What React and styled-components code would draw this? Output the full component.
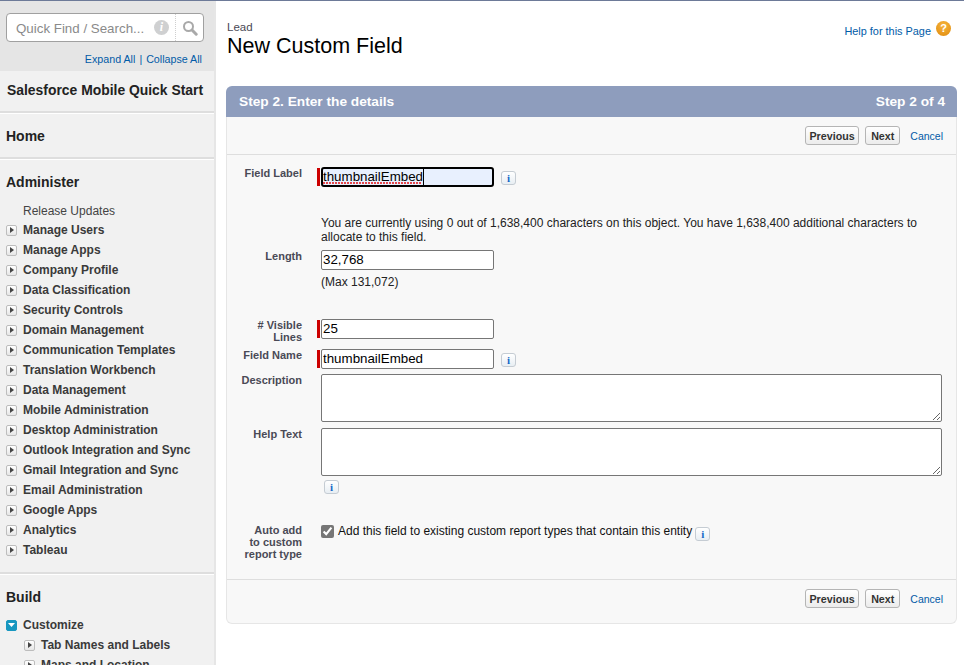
import React from 'react';
import styled, { createGlobalStyle } from 'styled-components';

const GlobalStyle = createGlobalStyle`
  html, body {
    margin: 0;
    padding: 0;
    height: 100%;
    overflow: hidden;
    background: #fff;
    font-family: "Liberation Sans", Arial, sans-serif;
    font-size: 12px;
    color: #222;
  }
`;

const Page = styled.div`
  display: flex;
  width: 964px;
  height: 665px;
  overflow: hidden;
  border-top: 1px solid #6d7a98;
  box-sizing: border-box;
`;

const Sidebar = styled.aside`
  width: 216px;
  flex: none;
  box-sizing: border-box;
  background: #f1f1f1;
  border-right: 2px solid #e6e6e6;
`;

const SearchArea = styled.div`
  height: 70px;
  box-sizing: border-box;
  background: #e5e5e5;
  padding: 12px 12px 0 6px;
`;

const SearchBox = styled.div`
  display: flex;
  align-items: center;
  height: 29px;
  width: 198px;
  box-sizing: border-box;
  background: #fff;
  border: 1px solid #a0a0a0;
  border-radius: 4px;
`;

const SearchText = styled.span`
  flex: 1;
  padding: 1px 0 0 9px;
  font-size: 13.33px;
  color: #8a8a8a;
  white-space: nowrap;
`;

const HintDot = styled.span`
  width: 15px;
  height: 15px;
  margin-right: 6px;
  border-radius: 50%;
  background: #cfd0d1;
  color: #fff;
  font: italic bold 12px/15px "Liberation Serif", serif;
  text-align: center;
`;

const SearchBtn = styled.span`
  display: flex;
  align-items: center;
  justify-content: center;
  width: 27px;
  height: 100%;
  border-left: 1px dotted #cfcfcf;
`;

const ExpandRow = styled.div`
  display: flex;
  justify-content: flex-end;
  gap: 4px;
  margin-top: 11px;
  font-size: 10.7px;
  line-height: 13px;
  color: #015ba7;
`;

const Section = styled.section`
  height: ${(p) => p.$height}px;
  box-sizing: border-box;
  border-bottom: 2px solid #dedede;
  box-shadow: 0 1px 0 #fff;
  margin-bottom: 1px;
  &:last-child {
    border-bottom: 0;
    box-shadow: none;
  }
`;

const SectionTitle = styled.h2`
  margin: 0;
  padding: ${(p) => p.$top}px 0 0 ${(p) => p.$left || 6}px;
  font-size: ${(p) => p.$size || 14}px;
  line-height: 16px;
  font-weight: bold;
  color: #222;
  white-space: nowrap;
`;

const MenuList = styled.div`
  margin-top: ${(p) => p.$top}px;
`;

const MenuRow = styled.div`
  display: flex;
  align-items: center;
  gap: 6px;
  height: ${(p) => (p.$plain ? 19 : 20)}px;
  padding-left: ${(p) => (p.$nested ? 24 : 6)}px;
  font-size: 12px;
  font-weight: ${(p) => (p.$plain ? 'normal' : 'bold')};
  color: #3a3a3a;
  white-space: nowrap;
`;

const PlainText = styled.span`
  padding-left: 17px;
  color: #444;
`;

const Toggle = styled.span`
  display: flex;
  align-items: center;
  justify-content: center;
  flex: none;
  width: 11px;
  height: 11px;
  box-sizing: border-box;
  border-radius: 2px;
  border: 1px solid ${(p) => (p.$open ? '#1797c0' : '#bdbdbd')};
  background: ${(p) => (p.$open ? '#1797c0' : 'linear-gradient(#fff, #e6e6e6)')};
`;

const Main = styled.main`
  flex: none;
  width: 731px;
  margin-left: 10px;
`;

const PageHead = styled.header`
  display: flex;
  justify-content: space-between;
  height: 85px;
`;

const Crumb = styled.div`
  padding: 20px 0 0 1px;
  font-size: 11.5px;
  line-height: 13px;
  color: #4a4a56;
`;

const PageTitle = styled.h1`
  margin: 0 0 0 1px;
  font-size: 21.5px;
  line-height: 24px;
  font-weight: normal;
  color: #000;
`;

const HelpLink = styled.div`
  display: flex;
  align-items: flex-start;
  gap: 5px;
  margin: 20px 6px 0 0;
  font-size: 10.9px;
  color: #015ba7;
`;

const HelpText = styled.span`
  padding-top: 4px;
`;

const HelpDot = styled.span`
  width: 15px;
  height: 15px;
  border-radius: 50%;
  background: radial-gradient(circle at 50% 30%, #f6b53f, #e08a0b);
  color: #fff;
  font-size: 11px;
  font-weight: bold;
  line-height: 15px;
  text-align: center;
`;

const Panel = styled.div`
  height: 538px;
  box-sizing: border-box;
  display: flex;
  flex-direction: column;
  background: #f8f8f8;
  border: 1px solid #e6e6e6;
  border-top: 0;
  border-radius: 8px 8px 6px 6px;
`;

const PanelHead = styled.div`
  display: flex;
  justify-content: space-between;
  align-items: center;
  height: 31px;
  margin: 0 -1px;
  padding: 0 12px 0 13px;
  border-radius: 6px 6px 0 0;
  background: #8e9dbd;
  color: #fff;
  font-size: 13.7px;
  font-weight: bold;
`;

const ButtonBar = styled.div`
  display: flex;
  justify-content: flex-end;
  align-items: center;
  gap: 6px;
  flex: none;
  height: ${(p) => p.$height}px;
  box-sizing: border-box;
  padding: 0 13px ${(p) => p.$lift || 0}px 0;
  border-${(p) => p.$edge}: 1px solid #dedede;
`;

const Button = styled.button`
  height: 19px;
  padding: 0 ${(p) => p.$pad}px;
  border: 1px solid #b5b5b5;
  border-radius: 3px;
  background: linear-gradient(#fff, #ececec);
  color: #333;
  font: bold 10.7px "Liberation Sans", Arial, sans-serif;
`;

const CancelLink = styled.span`
  margin-left: 4px;
  font-size: 10.5px;
  color: #015ba7;
`;

const FormBody = styled.div`
  flex: 1;
`;

const Row = styled.div`
  display: grid;
  grid-template-columns: 75px 1fr;
  margin-top: ${(p) => p.$top}px;
`;

const Label = styled.label`
  font-size: 11px;
  font-weight: bold;
  line-height: 12px;
  color: #4a4a56;
  text-align: right;
`;

const Field = styled.div`
  display: flex;
  align-items: flex-start;
  flex-wrap: ${(p) => (p.$stack ? 'wrap' : 'nowrap')};
  padding-left: ${(p) => (p.$required ? 15 : 19)}px;
`;

const RedBar = styled.span`
  flex: none;
  width: 3px;
  height: 18px;
  margin: 1px 1px 0 0;
  background: #c00;
`;

const InputWrap = styled.span`
  position: relative;
  display: block;
  flex: none;
`;

const TextInput = styled.input`
  display: block;
  flex: none;
  width: 173px;
  height: 20px;
  box-sizing: border-box;
  padding: 0 1px 2px;
  border: 1px solid #767676;
  border-radius: 2px;
  background: #fff;
  color: #000;
  font: 13.33px "Liberation Sans", Arial, sans-serif;
`;

const FocusInput = styled(TextInput)`
  border: 2px solid #000;
  border-radius: 3px;
  padding: 0 0 2px;
  background: #e8f0fe;
`;

const Caret = styled.span`
  position: absolute;
  left: 102px;
  top: 2px;
  width: 1px;
  height: 16px;
  background: #000;
`;

const Squiggle = styled.span`
  position: absolute;
  left: 2px;
  top: 15px;
  width: 99px;
  height: 2px;
  background: repeating-linear-gradient(90deg, #e5484d 0 2px, transparent 2px 3px);
`;

const TextArea = styled.textarea`
  display: block;
  width: 621px;
  height: 48px;
  box-sizing: border-box;
  border: 1px solid #767676;
  border-radius: 2px;
  background: #fff;
`;

const InfoBtn = styled.span`
  flex: none;
  width: 15px;
  height: 14px;
  box-sizing: border-box;
  margin-left: ${(p) => p.$left}px;
  margin-top: ${(p) => p.$down}px;
  border: 1px solid #c5ccd3;
  border-radius: 3px;
  background: linear-gradient(#fff, #e8eef3);
  color: #1468c8;
  font: bold 11px/12px "Liberation Serif", serif;
  text-align: center;
`;

const Note = styled.div`
  width: 621px;
  font-size: 12px;
  line-height: 14px;
  color: #222;
`;

const Hint = styled.div`
  margin-top: 5px;
  font-size: 12px;
  line-height: 14px;
  color: #222;
`;

const CheckInput = styled.input`
  flex: none;
  width: 13px;
  height: 13px;
  margin: 1px 4px 0 0;
  accent-color: #767676;
`;

const CheckText = styled.span`
  font-size: 12px;
  line-height: 14px;
  color: #111;
  white-space: nowrap;
`;

const adminItems = [
  'Manage Users',
  'Manage Apps',
  'Company Profile',
  'Data Classification',
  'Security Controls',
  'Domain Management',
  'Communication Templates',
  'Translation Workbench',
  'Data Management',
  'Mobile Administration',
  'Desktop Administration',
  'Outlook Integration and Sync',
  'Gmail Integration and Sync',
  'Email Administration',
  'Google Apps',
  'Analytics',
  'Tableau',
];

const RightArrow = () => (
  <svg width="4" height="6" viewBox="0 0 4 6">
    <path d="M0 0l4 3-4 3z" fill="#444" />
  </svg>
);

const DownArrow = () => (
  <svg width="7" height="4" viewBox="0 0 7 4">
    <path d="M0 0h7L3.5 4z" fill="#fff" />
  </svg>
);

const Magnifier = () => (
  <svg width="16" height="16" viewBox="0 0 16 16" fill="none" stroke="#a9a9a9">
    <circle cx="6.5" cy="6.5" r="4.5" strokeWidth="2" />
    <path d="M10 10l4.2 4.2" strokeWidth="3" strokeLinecap="round" />
  </svg>
);

const Buttons = ({ height, edge, lift }) => (
  <ButtonBar $height={height} $edge={edge} $lift={lift}>
    <Button $pad={3.5}>Previous</Button>
    <Button $pad={5}>Next</Button>
    <CancelLink>Cancel</CancelLink>
  </ButtonBar>
);

const App = () => (
  <Page>
    <GlobalStyle />
    <Sidebar>
      <SearchArea>
        <SearchBox>
          <SearchText>Quick Find / Search...</SearchText>
          <HintDot>i</HintDot>
          <SearchBtn>
            <Magnifier />
          </SearchBtn>
        </SearchBox>
        <ExpandRow>
          <span>Expand All</span>
          <span>|</span>
          <span>Collapse All</span>
        </ExpandRow>
      </SearchArea>
      <Section $height={42}>
        <SectionTitle $top={11} $size={13.9} $left={7}>Salesforce Mobile Quick Start</SectionTitle>
      </Section>
      <Section $height={45}>
        <SectionTitle $top={14}>Home</SectionTitle>
      </Section>
      <Section $height={414}>
        <SectionTitle $top={14}>Administer</SectionTitle>
        <MenuList $top={11}>
          <MenuRow $plain>
            <PlainText>Release Updates</PlainText>
          </MenuRow>
          {adminItems.map((name) => (
            <MenuRow key={name}>
              <Toggle>
                <RightArrow />
              </Toggle>
              {name}
            </MenuRow>
          ))}
        </MenuList>
      </Section>
      <Section $height={95}>
        <SectionTitle $top={14}>Build</SectionTitle>
        <MenuList $top={10}>
          <MenuRow>
            <Toggle $open>
              <DownArrow />
            </Toggle>
            Customize
          </MenuRow>
          <MenuRow $nested>
            <Toggle>
              <RightArrow />
            </Toggle>
            Tab Names and Labels
          </MenuRow>
          <MenuRow $nested>
            <Toggle>
              <RightArrow />
            </Toggle>
            Maps and Location
          </MenuRow>
        </MenuList>
      </Section>
    </Sidebar>
    <Main>
      <PageHead>
        <div>
          <Crumb>Lead</Crumb>
          <PageTitle>New Custom Field</PageTitle>
        </div>
        <HelpLink>
          <HelpText>Help for this Page</HelpText>
          <HelpDot>?</HelpDot>
        </HelpLink>
      </PageHead>
      <Panel>
        <PanelHead>
          <span>Step 2. Enter the details</span>
          <span>Step 2 of 4</span>
        </PanelHead>
        <Buttons height={38} edge="bottom" />
        <FormBody>
          <Row $top={12}>
            <Label>Field Label</Label>
            <Field $required>
              <RedBar />
              <InputWrap>
                <FocusInput defaultValue="thumbnailEmbed" spellCheck={false} />
                <Squiggle />
                <Caret />
              </InputWrap>
              <InfoBtn $left={7} $down={4}>i</InfoBtn>
            </Field>
          </Row>
          <Row $top={29}>
            <span />
            <Field>
              <Note>
                You are currently using 0 out of 1,638,400 characters on this object. You have 1,638,400 additional
                characters to allocate to this field.
              </Note>
            </Field>
          </Row>
          <Row $top={6}>
            <Label>Length</Label>
            <Field>
              <div>
                <TextInput defaultValue="32,768" />
                <Hint>(Max 131,072)</Hint>
              </div>
            </Field>
          </Row>
          <Row $top={30}>
            <Label>
              # Visible
              <br />
              Lines
            </Label>
            <Field $required>
              <RedBar />
              <TextInput defaultValue="25" />
            </Field>
          </Row>
          <Row $top={6}>
            <Label>Field Name</Label>
            <Field $required>
              <RedBar />
              <TextInput defaultValue="thumbnailEmbed" />
              <InfoBtn $left={7} $down={4}>i</InfoBtn>
            </Field>
          </Row>
          <Row $top={5}>
            <Label>Description</Label>
            <Field>
              <TextArea />
            </Field>
          </Row>
          <Row $top={6}>
            <Label>Help Text</Label>
            <Field $stack>
              <TextArea />
              <InfoBtn $left={3} $down={4}>i</InfoBtn>
            </Field>
          </Row>
          <Row $top={30}>
            <Label>
              Auto add
              <br />
              to custom
              <br />
              report type
            </Label>
            <Field>
              <CheckInput type="checkbox" defaultChecked />
              <CheckText>Add this field to existing custom report types that contain this entity</CheckText>
              <InfoBtn $left={3} $down={3}>i</InfoBtn>
            </Field>
          </Row>
        </FormBody>
        <Buttons height={44} edge="top" lift={6} />
      </Panel>
    </Main>
  </Page>
);

export default App;
